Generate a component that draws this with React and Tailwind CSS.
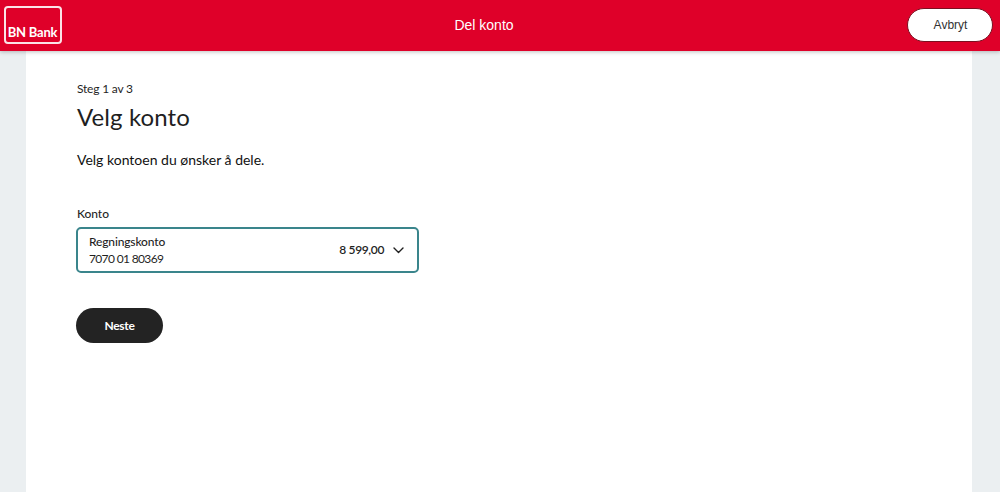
import React from "react";

export default function App() {
  return (
    <div className="h-[492px] overflow-hidden bg-[#ebeff1] flex flex-col font-['Lato','Noto_Sans',sans-serif] text-[#1f1f1f]">
      <header className="h-[51px] shrink-0 bg-[#df0029] relative flex items-center justify-center pr-[32px] shadow-[0_1px_4px_rgba(0,0,0,0.25)] z-10">
        <div className="absolute left-[4px] top-[6px] w-[58px] h-[38px] border-2 border-[#fbe3e7] rounded-[4px] flex items-end justify-center pb-[1px] pr-[1px]">
          <span className="text-white text-[13px] leading-[17px] font-bold tracking-[-0.2px] whitespace-nowrap">BN Bank</span>
        </div>
        <span className="text-white text-[14px] font-['Liberation_Sans',sans-serif]">Del konto</span>
        <button className="absolute left-[907px] top-[8px] w-[86px] h-[34px] rounded-full bg-white border border-[#7a1020] text-[#333] text-[12px] pl-[1px] font-['Liberation_Sans',sans-serif]">
          Avbryt
        </button>
      </header>
      <main className="flex-1 mx-[26px] w-[946px] bg-white pl-[51px] pt-[30px]">
        <p className="text-[12px] leading-[16px] tracking-[-0.2px]">Steg 1 av 3</p>
        <h1 className="mt-[4px] text-[24px] leading-[32px] font-normal tracking-[0.1px]">Velg konto</h1>
        <p className="mt-[17px] text-[14px] leading-[20px] text-[#111]">Velg kontoen du ønsker å dele.</p>
        <label className="block mt-[36px] text-[12px] leading-[16px] font-medium tracking-[-0.05px]">Konto</label>
        <div className="mt-[5px] -ml-[1px] w-[343px] h-[46px] border-2 border-[#3a858c] rounded-[5px] flex items-center justify-between pl-[11px] pr-[13px]">
          <div className="text-[12px] leading-[17px] tracking-[-0.15px]">
            <div className="font-medium">Regningskonto</div>
            <div className="tracking-[-0.65px]">7070 01 80369</div>
          </div>
          <div className="flex items-center gap-[9px]">
            <span className="text-[12px] font-semibold tracking-[-0.35px]">8 599,00</span>
            <svg width="11" height="7" viewBox="0 0 11 7" fill="none" stroke="#1f1f1f" strokeWidth="1.4" strokeLinecap="round" strokeLinejoin="round">
              <path d="M1 1 L5.5 5.5 L10 1" />
            </svg>
          </div>
        </div>
        <button className="mt-[35px] -ml-[1px] block w-[87px] h-[35px] rounded-full bg-[#232323] text-white text-[12px] font-bold tracking-[-0.3px]">
          Neste
        </button>
      </main>
    </div>
  );
}
